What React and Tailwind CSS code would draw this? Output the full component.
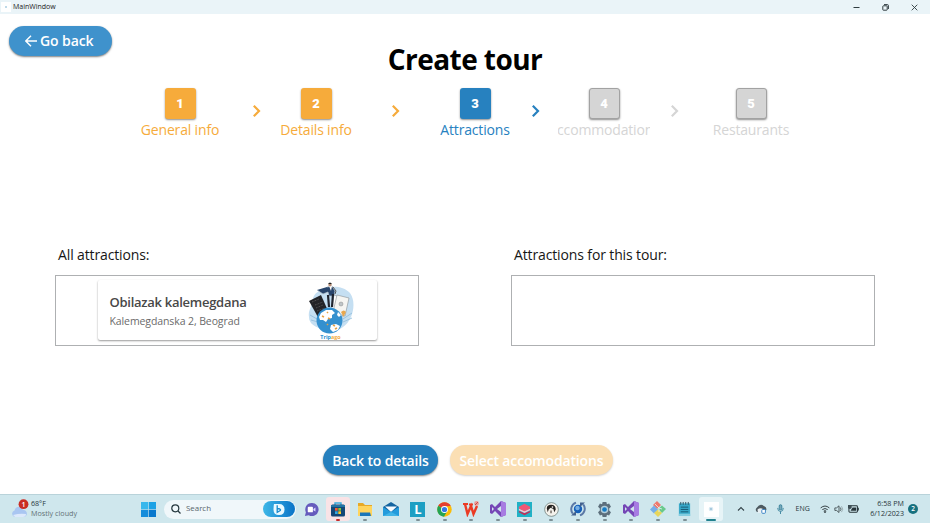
import React from 'react';

const FONT = "font-['Open_Sans','Noto_Sans',sans-serif]";

function Chevron({ className }) {
  return (
    <svg viewBox="0 0 12 14" className={`h-[14px] w-[12px] shrink-0 ${className}`} fill="none" stroke="currentColor" strokeWidth="2.2">
      <path d="M3.8 1.8 9 7 3.8 12.2" />
    </svg>
  );
}

function Step({ n, label, box, text, className = '' }) {
  return (
    <div className={`flex w-[92px] shrink-0 flex-col items-center overflow-hidden pt-[2px] ${className}`}>
      <div className={`flex h-[31px] w-[31px] items-center justify-center rounded-[3px] font-['Roboto',sans-serif] text-[13px] font-black leading-none text-white shadow-[0_1px_2px_rgba(0,0,0,0.45)] ${box}`}>
        {n}
      </div>
      <div className={`mt-[2px] whitespace-nowrap text-[14px] leading-[18px] tracking-[-0.17px] ${text}`}>{label}</div>
    </div>
  );
}

function TourArt() {
  return (
    <svg viewBox="0 0 48 60" className="h-[60px] w-[48px]">
      <path d="M12 9C18 4 35 2 43 11C48 18 47 28 44 35C39 46 28 52 18 48C8 45 2 42 2 35C1 29 4 26 5 21C6 15 7 12 12 9Z" fill="#c5dff2" />
      <path d="M3 33 10 37M4 38 11 40M45 31 36 37M45 36 36 40" stroke="#8ebbda" strokeWidth=".8" />
      <path d="m2 19 12-6 8 18-10 6Z" fill="#222327" />
      <path d="m5 20 7-3M8 23l8-3M9 26l7-3M10 29l8-3" stroke="#666" strokeWidth=".7" strokeDasharray="1 .7" />
      <path d="m27 13 13 5-5 17-11-5Z" fill="#fff" stroke="#9aa1a5" strokeWidth=".6" />
      <path d="m30 13 12 3-4 18-12-4Z" fill="#f5f5f2" stroke="#888e92" strokeWidth=".6" />
      <circle cx="34" cy="22" r="2" fill="#bfc5c8" stroke="#777" strokeWidth=".4" />
      <path d="m20 5 5-1 3 5-1 5h-5l-1-4-5 2-6-4" fill="#28456c" stroke="#bcc7cf" strokeWidth=".7" />
      <path d="m21 13 1 12M26 12l-1 13" stroke="#20252f" strokeWidth="2.2" />
      <path d="m22 4 2 5 1-5" fill="#fff" />
      <circle cx="23" cy="2.8" r="1.7" fill="#b38b75" />
      <path d="M21 2q2-3 4 0Z" fill="#222" />
      <path d="m26 5 3 4-1 3" fill="none" stroke="#333" strokeWidth=".8" />
      <circle cx="22.5" cy="38.5" r="13" fill="#3490cf" />
      <path d="m14 31 5-3 6 0 3 3-3 2 0 3-4 1-2 3-3-2-3 0-1-3ZM24 43l5-1 4 2-2 4-5 2-3-3ZM31 30l3 3-2 2-2-2Z" fill="#fff" />
      <path d="m15 34 2 1M20 30l1 1M21 36l2 1M26 43l2 1M28 47l2-1M20 42l1 1" stroke="#e6a044" strokeWidth="1.6" />
      <path d="M34 30q3-3 5 0l-2.5 5Z" fill="#e7a850" />
    </svg>
  );
}

function AttractionCard() {
  return (
    <div className="flex h-[60px] w-[279px] rounded-[2px] bg-white shadow-[0_1px_2px_rgba(0,0,0,0.4)]">
      <div className="w-[208px] pl-[12px] pt-[13px]">
        <div className="whitespace-nowrap text-[13px] font-semibold leading-[19px] tracking-[-0.27px] text-[#484848]">Obilazak kalemegdana</div>
        <div className="mt-[1px] whitespace-nowrap text-[10.5px] leading-[16px] text-[#6b6b6b] tracking-[-0.1px]">Kalemegdanska 2, Beograd</div>
      </div>
      <div className="flex w-[50px] flex-col items-center pt-[2px]">
        <div className="h-[52px]"><TourArt /></div>
        <div className="relative text-[5.4px] font-bold leading-[7px] text-[#2d91d0]">Trip<span className="text-[#f4ac45]">ago</span></div>
      </div>
    </div>
  );
}

function VS() {
  return <svg viewBox="0 0 16 16" className="size-[16px]"><path d="m11 0 5 2v12l-5 2-6-6-3 3-2-1V4l2-1 3 3Z" fill="#7546b6" /><path d="m11 0 5 2v12l-5 2Z" fill="#a77ce2" /><path d="m2 6 2 2-2 2ZM11 5 7 8l4 3Z" fill="#cfe6ec" /></svg>;
}

const apps = [
  { name: 'chat', icon: <svg viewBox="0 0 16 16" className="size-[15px]"><path d="M8 1a7 7 0 1 1-3 13l-4 1 1-4A7 7 0 0 1 8 1Z" fill="#655bbd" /><rect x="4" y="5" width="5.5" height="6" rx="1" fill="#fff" /><path d="m10 7.5 2.2-1.7v4.4L10 8.7Z" fill="#ddd8ff" /></svg> },
  { name: 'store', active: 'bg-[#f9e3e6]', bar: 'bg-[#c42b2b] w-[4px]', icon: <svg viewBox="0 0 16 16" className="size-[16px]"><path d="M5 4V2h6v2" fill="none" stroke="#39a9dc" strokeWidth="1.4" /><rect x="1" y="3.5" width="14" height="12" rx="1.5" fill="#154777" /><path d="M1 4h14v2H1Z" fill="#2473a4" /><path d="M5 7h2.7v2.7H5Z" fill="#f25c35" /><path d="M8.3 7H11v2.7H8.3Z" fill="#8cc63f" /><path d="M5 10.3h2.7V13H5Z" fill="#36a9e1" /><path d="M8.3 10.3H11V13H8.3Z" fill="#ffca28" /></svg> },
  { name: 'files', bar: 'bg-[#7d8f95] w-[4px]', icon: <svg viewBox="0 0 16 16" className="size-[16px]"><path d="M1 2h5l2 2h7v10H1Z" fill="#e7a926" /><path d="M1 5h14v10H1Z" fill="#ffd45c" /><path d="M3 11.5h10l1 3.5H3Z" fill="#1976b9" /></svg> },
  { name: 'mail', icon: <svg viewBox="0 0 16 16" className="size-[16px]"><path d="m0 6 8-5 8 5v9H0Z" fill="#1464a0" /><path d="M2 5.5h12L8 11Z" fill="#f6fbff" /><path d="m0 6 8 5 8-5v9H0Z" fill="#239bdc" /><path d="m0 15 8-4 8 4Z" fill="#41b4e6" /></svg> },
  { name: 'lapp', bar: 'bg-[#7d8f95] w-[4px]', icon: <div className="flex size-[15px] items-center justify-center bg-[#1c9fc3] text-[13px] font-bold leading-none text-white">L</div> },
  { name: 'chrome', bar: 'bg-[#7d8f95] w-[4px]', icon: <svg viewBox="0 0 16 16" className="size-[15px]"><circle cx="8" cy="8" r="7.7" fill="#fbbc05" /><path d="M8 8 1.3 4.1A7.7 7.7 0 0 1 14.7 4.2L8 4.5Z" fill="#e43e30" /><path d="M8 8 1.3 4.1A7.7 7.7 0 0 0 7.4 15.7L11 9.7Z" fill="#23a455" /><circle cx="8" cy="8" r="3.7" fill="#fff" /><circle cx="8" cy="8" r="2.8" fill="#3478e5" /></svg> },
  { name: 'office', bar: 'bg-[#7d8f95] w-[4px]', icon: <svg viewBox="0 0 16 16" className="size-[16px]"><path d="m2 3 2.5 10L8 5l2.5 8L14 5" fill="none" stroke="#eb3b24" strokeWidth="2.4" /><path d="M0 3h5M6 3.5h4" stroke="#eb3b24" strokeWidth="1.8" /><circle cx="13.5" cy="2.5" r="2.4" fill="#ee9b95" /><path d="m12 4 3-3" stroke="#c54c48" /></svg> },
  { name: 'vs1', bar: 'bg-[#7d8f95] w-[4px]', icon: <VS /> },
  { name: 'layers', bar: 'bg-[#7d8f95] w-[4px]', icon: <svg viewBox="0 0 16 16" className="size-[15px]"><path d="M0 0h16v16H0Z" fill="#20b2c6" /><path d="m2 9.5 6 2.5 6-2.5V11l-6 3-6-3Z" fill="#c62b55" /><path d="m2 7 6 2.5L14 7v1.8l-6 3-6-3Z" fill="#f8c3ce" /><path d="m8 1.8 6 3.2v1.8l-6 3-6-3V5Z" fill="#f05875" /></svg> },
  { name: 'beaver', bar: 'bg-[#7d8f95] w-[4px]', icon: <svg viewBox="0 0 16 16" className="size-[15px]"><circle cx="8" cy="8" r="7.3" fill="#f4f2ec" stroke="#6a7976" strokeWidth=".8" /><path d="M3 7q0-4 4.5-4 5 0 5 5l-1.5 3-1-3.5-3-1.5-2 2-1 3Z" fill="#26221f" /><circle cx="9" cy="5.3" r=".9" fill="#fff" /><path d="M6.5 9h2v3h-2Z" fill="#8d8780" /></svg> },
  { name: 'sync', bar: 'bg-[#7d8f95] w-[4px]', icon: <svg viewBox="0 0 16 16" className="size-[16px]"><circle cx="8" cy="8" r="4.2" fill="#1660b9" /><circle cx="7.5" cy="7" r="2.2" fill="#75aee3" /><path d="M6 1.6a7 7 0 0 0-3.2 11M10 14.4a7 7 0 0 0 3.2-11" stroke="#5a78a6" strokeWidth="2" fill="none" /><path d="M1 14.5h5V10ZM15 1.5h-5V6Z" fill="#42608e" /></svg> },
  { name: 'gear', bar: 'bg-[#7d8f95] w-[4px]', icon: <svg viewBox="0 0 16 16" className="size-[15px]"><path d="m6 0 4 0 .6 2.3 2.3-.7 2 3.5L13 7v2l1.9 1.8-2 3.5-2.3-.7L10 16H6l-.6-2.4-2.3.7-2-3.5L3 9V7L1.1 5.1l2-3.5 2.3.7Z" fill="#5d6f7c" /><circle cx="8" cy="8" r="4" fill="#b2cdda" /><circle cx="8" cy="8" r="2.5" fill="#187cc4" /></svg> },
  { name: 'vs2', bar: 'bg-[#7d8f95] w-[4px]', icon: <VS /> },
  { name: 'git', bar: 'bg-[#7d8f95] w-[4px]', icon: <svg viewBox="0 0 16 16" className="size-[16px]"><path d="m7 0 4 4-4 4-4-4Z" fill="#f0796c" /><path d="m12 4.5 4 3.5-4 4-4-4Z" fill="#69c98b" /><path d="m4 4.5 4 4-4 4-4-4Z" fill="#74aeea" /><path d="m8 8.5 4 3.5-4 4-4-4Z" fill="#e8d65b" /><path d="m5 3 4 4v4M9 7l3 1" fill="none" stroke="#e5f3f5" strokeWidth=".8" /></svg> },
  { name: 'notes', bar: 'bg-[#7d8f95] w-[4px]', icon: <svg viewBox="0 0 16 16" className="h-[16px] w-[15px]"><path d="M2 2h12v13.5H2Z" fill="#38a9c9" /><path d="M2 13h12v2.5H2Z" fill="#83cde0" /><path d="M4 .5v3M6.6.5v3M9.3.5v3M12 .5v3" stroke="#2b5160" /><path d="M4 6h8M4 8.5h8M4 11h8" stroke="#185a72" strokeWidth="1" /></svg> },
  { name: 'tour', active: 'bg-[#e7f4f7]', bar: 'bg-[#22818e] w-[10px]', icon: <div className="flex size-[15px] items-center justify-center bg-white"><svg viewBox="0 0 6 6" className="size-[6px]"><circle cx="3" cy="3" r="2.3" fill="#d6e8f2" /><circle cx="3" cy="3" r=".9" fill="#8fb9d2" /></svg></div> },
];

function Taskbar() {
  return (
    <footer className="flex h-[29px] w-full shrink-0 items-center border-t border-[#b9d3da] bg-[#cfe7ed] text-[7.1px] text-[#27353a]">
      <div className="flex w-[141px] shrink-0 items-center pl-[11px]">
        <svg viewBox="0 0 18 20" className="mr-[2px] h-[20px] w-[18px]">
          <path d="M4 18a3.4 3.4 0 0 1-.5-6.6C5 6.5 11 7 12 11c5-.5 5 7 1 7Z" fill="#a9c6f1" />
          <path d="M2 16q7-2 13-1c0 2-1 3-3 3H4Z" fill="#dce9fb" />
          <circle cx="12.5" cy="5.2" r="4.9" fill="#c92d24" />
          <text x="12.5" y="7.8" textAnchor="middle" fill="#fff" fontSize="7.2" fontWeight="600">1</text>
        </svg>
        <div className="-mt-[2px] whitespace-nowrap leading-[10px]"><div className="text-[7.1px]">68°F</div><div className="text-[7.2px] text-[#637277]">Mostly cloudy</div></div>
      </div>
      <svg viewBox="0 0 15 15" className="size-[15px] shrink-0"><path d="M0 0h7.2v7.2H0Z" fill="#37b7ec" /><path d="M7.8 0H15v7.2H7.8Z" fill="#1ba2e5" /><path d="M0 7.8h7.2V15H0Z" fill="#158ddb" /><path d="M7.8 7.8H15V15H7.8Z" fill="#0878cd" /></svg>
      <div className="ml-[8px] flex h-[19px] w-[132px] shrink-0 items-center rounded-full bg-[#f0f7fa] pl-[7px] pr-[1px]">
        <svg viewBox="0 0 10 10" className="size-[10px]" fill="none" stroke="#26383f" strokeWidth="1.2"><circle cx="4.3" cy="4.3" r="3.5" /><path d="m7 7 2.5 2.5" /></svg>
        <span className="ml-[5px] text-[7.9px] text-[#58666c]">Search</span>
        <div className="ml-auto flex h-[16px] w-[32px] items-center justify-center rounded-full bg-linear-to-r from-[#3eb7e7] to-[#0873c7]">
          <svg viewBox="0 0 12 12" className="size-[12px]"><path d="M1 1h5q5.5 0 5.5 5.5T6 12 .5 6.5Q.5 3 1 1Z" fill="#eaf9ff" /><path d="M4.2 2.3v7l3-1.7q1.2-1.8-2.8-2.1" fill="none" stroke="#198bce" strokeWidth="1.3" /></svg>
        </div>
      </div>
      <div className="ml-[2px] flex shrink-0">
        {apps.map((app) => (
          <div key={app.name} className="flex w-[26.67px] justify-center">
            <div className={`flex h-[24px] w-[24px] shrink-0 flex-col items-center rounded-[3px] pt-[4px] ${app.active || ''}`}>
              <div className="flex h-[16px] items-center">{app.icon}</div>
              {app.bar && <span className={`mt-[1.5px] h-[2px] rounded-full ${app.bar}`} />}
            </div>
          </div>
        ))}
      </div>
      <div className="ml-[12px] flex shrink-0 items-center">
        <svg viewBox="0 0 8 6" className="w-[8px]" fill="none" stroke="#334248" strokeWidth="1.1"><path d="m1 4.5 3-3 3 3" /></svg>
        <svg viewBox="0 0 12 10" className="ml-[10px] w-[12px]"><path d="M2 8Q-.5 5.5 2 3.5q3-4.5 7-1.5 3 1 2.3 4L9 8Z" fill="#4e5a60" /><path d="M2.5 5.5q3-2.5 6 0L8 9H3Z" fill="#e7eff3" /><rect x="6.8" y="5.5" width="3.6" height="3.8" rx=".8" fill="#fff" stroke="#2b7bc2" strokeWidth=".9" /></svg>
        <svg viewBox="0 0 8 12" className="ml-[10px] w-[7px]" fill="none" stroke="#347f99" strokeWidth="1"><rect x="2.5" y=".8" width="3" height="6" rx="1.5" fill="#7aa9b9" /><path d="M.8 4.5q0 4 3.2 4t3.2-4M4 8.5v3" /></svg>
        <span className="ml-[12px] w-[17px] text-[7px]">ENG</span>
        <svg viewBox="0 0 12 10" className="ml-[7px] w-[10px]" fill="none" stroke="#384347" strokeWidth="1.2"><path d="M.8 3.5q5.2-4.5 10.4 0M2.8 5.5Q6 3 9.2 5.5M4.5 7.4Q6 6.2 7.5 7.4" /><circle cx="6" cy="8.5" r=".6" fill="#384347" /></svg>
        <svg viewBox="0 0 12 10" className="ml-[4px] w-[10px]" fill="none" stroke="#384347"><path d="M1 3.5h2L6 1v8L3 6.5H1ZM7.5 3q2 2 0 4" /><path d="M9 1.5q3 3.5 0 7" stroke="#95a5aa" /></svg>
        <svg viewBox="0 0 12 10" className="ml-[4px] w-[11px]"><rect x="1" y="2" width="9.3" height="7" rx="1" fill="none" stroke="#263439" strokeWidth="1.1" /><path d="M10.5 4h1.3v3h-1.3Z" fill="#263439" /><path d="M5 3.7h4v3.8H2.8Z" fill="#263439" /><path d="M0 1h4v3.5q-2 2-4 0Z" fill="#3e4e54" /></svg>
      </div>
      <div className="-mt-[2px] ml-auto mr-[4px] whitespace-nowrap text-right leading-[10px] tracking-[0.03px]"><div>6:58 PM</div><div>6/12/2023</div></div>
      <div className="mr-[12px] flex size-[10px] shrink-0 items-center justify-center rounded-full bg-[#17717f] text-[6.5px] font-semibold leading-none text-white">2</div>
    </footer>
  );
}

export default function App() {
  return (
    <div className={`flex h-[523px] w-[930px] flex-col overflow-hidden bg-white ${FONT}`}>
      <header className="flex h-[14px] shrink-0 items-center bg-[#eaf4f8] text-[7px] text-[#1b1b1b]">
        <span className="ml-[1px] flex size-[10px] items-center justify-center bg-white"><span className="size-[2px] rounded-full bg-[#a9cce0]" /></span>
        <span className="ml-[2px]">MainWindow</span>
        <div className="ml-auto mr-[12px] flex items-center gap-[22px] text-[#303c40]">
          <svg viewBox="0 0 7 7" className="size-[7px]" stroke="currentColor"><path d="M.5 3.5h6" /></svg>
          <svg viewBox="0 0 7 7" className="size-[7px]" fill="none" stroke="currentColor"><rect x=".8" y="1.8" width="4.4" height="4.4" rx=".6" /><path d="M2 .6h3.4q1 0 1 1V5" /></svg>
          <svg viewBox="0 0 7 7" className="size-[7px]" stroke="currentColor" strokeWidth=".9"><path d="m.7.7 5.6 5.6m0-5.6L.7 6.3" /></svg>
        </div>
      </header>
      <main className="flex min-h-0 flex-1 flex-col">
        <button className="ml-[9px] mt-[12px] flex h-[30px] w-[103px] shrink-0 items-center rounded-full bg-[#3f92cc] pl-[16px] text-[14px] font-semibold text-white shadow-[0_1px_2px_rgba(0,0,0,0.5)]">
          <svg viewBox="0 0 12 12" className="mr-[3px] size-[12px]" fill="none" stroke="currentColor" strokeWidth="1.4"><path d="M12 6H1M6 .8.8 6 6 11.2" /></svg>
          <span className="whitespace-nowrap leading-[18px] tracking-[-0.1px]">Go back</span>
        </button>
        <h1 className="-mt-[15px] h-[37px] shrink-0 text-center text-[28px] font-bold leading-[36px] tracking-[-0.55px] text-black">Create tour</h1>
        <nav className="mt-[8px] flex h-[54px] shrink-0 pl-[134px]">
          <Step n="1" label="General info" box="bg-[#f6ab3b]" text="text-[#f6ab3b]" />
          <Chevron className="ml-[24px] mt-[18px] text-[#f6ab3b]" />
          <Step n="2" label="Details info" box="bg-[#f6ab3b]" text="text-[#f6ab3b]" className="ml-[8px]" />
          <Chevron className="ml-[27px] mt-[18px] text-[#f6ab3b]" />
          <Step n="3" label="Attractions" box="bg-[#2781bf]" text="text-[#2781bf]" className="ml-[28px]" />
          <Chevron className="ml-[8px] mt-[18px] text-[#2781bf]" />
          <Step n="4" label="Accommodations" box="border border-[#a2a2a2] bg-[#d5d5d5]" text="text-[#d5d5d5]" className="ml-[17px]" />
          <Chevron className="ml-[18px] mt-[18px] text-[#d5d5d5]" />
          <Step n="5" label="Restaurants" box="border border-[#a2a2a2] bg-[#d5d5d5]" text="text-[#d5d5d5]" className="ml-[25px]" />
        </nav>
        <div className="mt-[105px] flex shrink-0 gap-[92px] pl-[55px]">
          <section className="w-[364px]">
            <h2 className="ml-[3px] h-[20px] whitespace-nowrap text-[14px] leading-[20px] tracking-[-0.13px] text-[#161616]">All attractions:</h2>
            <div className="mt-[10px] flex h-[71px] justify-center border border-[#aeb0b2] pt-[4px]"><AttractionCard /></div>
          </section>
          <section className="w-[364px]">
            <h2 className="ml-[3px] h-[20px] whitespace-nowrap text-[14px] leading-[20px] tracking-[-0.13px] text-[#161616]">Attractions for this tour:</h2>
            <div className="mt-[10px] h-[71px] border border-[#aeb0b2]" />
          </section>
        </div>
        <div className="mt-[99px] flex shrink-0 justify-center gap-[12px] pl-[6px] text-[14px] font-semibold tracking-[-0.15px] text-white">
          <button className="h-[30px] w-[115px] whitespace-nowrap rounded-full bg-[#2680be] leading-[31px] shadow-[0_1px_2px_rgba(0,0,0,0.5)]">Back to details</button>
          <button className="h-[30px] w-[163px] whitespace-nowrap rounded-full bg-[#fbdfb4] leading-[31px] shadow-[0_1px_2px_rgba(0,0,0,0.18)]">Select accomodations</button>
        </div>
      </main>
      <Taskbar />
    </div>
  );
}
